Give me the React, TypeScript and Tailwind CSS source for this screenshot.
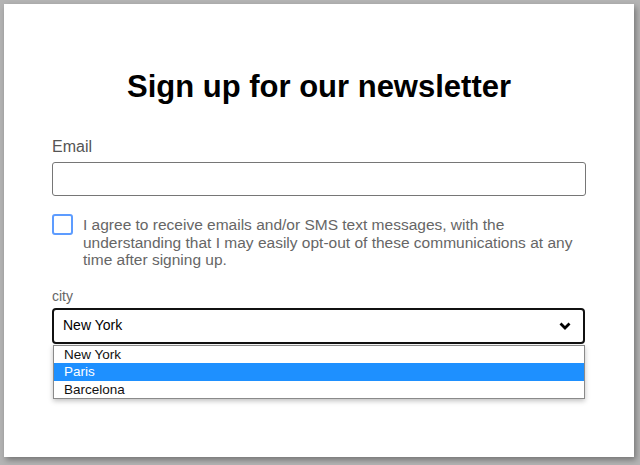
import React from "react";

export default function App() {
  return (
    <div className="w-[640px] h-[465px] bg-[#b4b4b4] pt-[4px] pl-[4px]" style={{ fontFamily: '"Liberation Sans", Arial, sans-serif' }}>
      <div className="w-[630px] h-[453px] bg-white shadow-[2px_3px_6px_rgba(0,0,0,0.35)] px-[48px] pt-[63px] relative">
        <h1 className="text-center text-[31px] leading-[40px] font-bold text-black">Sign up for our newsletter</h1>
        <div className="mt-[31px] text-[16px] leading-[18px] text-[#555]">Email</div>
        <div className="mt-[6px] h-[34px] w-[534px] border border-[#767676] rounded-[3px]" />
        <div className="mt-[17px] flex items-start">
          <div className="mt-[1px] w-[21px] h-[21px] rounded-[3px] border-2 border-[#5d9cff] shrink-0" />
          <p className="ml-[10px] mt-[3px] text-[15.5px] leading-[17.5px] text-[#666] w-[500px]">
            I agree to receive emails and/or SMS text messages, with the understanding that I may easily opt-out of these communications at any time after signing up.
          </p>
        </div>
        <div className="mt-[19px] text-[14px] leading-[16px] text-[#666]">city</div>
        <div className="mt-[4px] relative w-[533px]">
          <div className="h-[36px] border-2 border-[#111] rounded-[4px] flex items-center justify-between pl-[9px] pr-[12px] text-[14px] text-black">
            <span>New York</span>
            <svg width="12" height="8" viewBox="0 0 12 8"><path d="M1.5 1.5 L6 6 L10.5 1.5" fill="none" stroke="#000" strokeWidth="2.8" /></svg>
          </div>
          <div className="absolute left-[1px] right-0 top-[37px] bg-white border border-[#8a8a8a] shadow-[0_2px_5px_rgba(0,0,0,0.25)] text-[13.5px] leading-[17.5px] text-[#111]">
            <div className="pl-[10px]">New York</div>
            <div className="pl-[10px] bg-[#1e90ff] text-white">Paris</div>
            <div className="pl-[10px]">Barcelona</div>
          </div>
        </div>
      </div>
    </div>
  );
}
